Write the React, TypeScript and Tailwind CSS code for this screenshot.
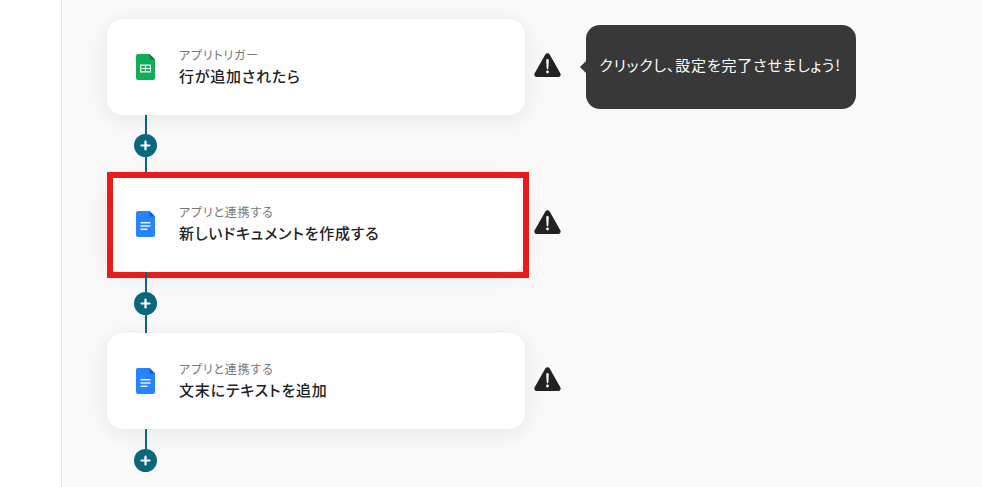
const FONT = "font-['Noto_Sans_CJK_JP','Noto_Sans',sans-serif] [font-feature-settings:'palt'] tracking-wider";

function SheetsIcon() {
  return (
    <svg width="19" height="26" viewBox="0 0 19 26" className="shrink-0">
      <path d="M2 0h11.5L19 5.5V24a2 2 0 0 1-2 2H2a2 2 0 0 1-2-2V2a2 2 0 0 1 2-2z" fill="#0ead56" />
      <path d="M13.5 0L19 5.5h-4a1.5 1.5 0 0 1-1.5-1.5z" fill="#0a7f3f" />
      <path d="M4 10.5h11v8H4z" fill="#e8f7ee" />
      <path d="M5.2 11.7h3.7v2.2H5.2zM10.1 11.7h3.7v2.2h-3.7zM5.2 15.1h3.7v2.2H5.2zM10.1 15.1h3.7v2.2h-3.7z" fill="#0ead56" />
    </svg>
  );
}

function DocsIcon() {
  return (
    <svg width="19" height="26" viewBox="0 0 19 26" className="shrink-0">
      <path d="M2 0h11.5L19 5.5V24a2 2 0 0 1-2 2H2a2 2 0 0 1-2-2V2a2 2 0 0 1 2-2z" fill="#2684fc" />
      <path d="M13.5 0L19 5.5h-4a1.5 1.5 0 0 1-1.5-1.5z" fill="#0f5fd0" />
      <path d="M4.5 11h10v1.6h-10zM4.5 14.2h10v1.6h-10zM4.5 17.4h7v1.6h-7z" fill="#e6f0ff" />
    </svg>
  );
}

function WarningIcon() {
  return (
    <svg width="27" height="24" viewBox="0 0 27 24" className="shrink-0">
      <path
        d="M11.3 1.6a2.5 2.5 0 0 1 4.4 0l10.6 18.6a2.5 2.5 0 0 1-2.2 3.8H2.9a2.5 2.5 0 0 1-2.2-3.8z"
        fill="#222222"
      />
      <path d="M12.2 7.4a1.3 1.3 0 0 1 2.6 0l-.5 8.2a.8.8 0 0 1-1.6 0z" fill="#ffffff" />
      <circle cx="13.5" cy="19" r="1.4" fill="#ffffff" />
    </svg>
  );
}

function Connector({ last, first }: { last?: boolean; first?: boolean }) {
  return (
    <div className={`relative flex h-[61px] w-[418px] items-center pl-[27px] ${first ? "" : "pt-px"}`}>
      <div className={`absolute left-[38px] top-0 w-[2px] bg-[#0b6780] ${last ? "h-8" : "bottom-0"}`} />
      <div className="relative flex h-[23px] w-[23px] items-center justify-center rounded-full bg-[#0b6780]">
        <svg width="11" height="11" viewBox="0 0 11 11">
          <path d="M5.5 1.5v8M1.5 5.5h8" stroke="#ffffff" strokeWidth="2.2" strokeLinecap="round" />
        </svg>
      </div>
    </div>
  );
}

function StepCard({
  icon,
  label,
  title,
  highlighted,
}: {
  icon: React.ReactNode;
  label: string;
  title: string;
  highlighted?: boolean;
}) {
  return (
    <div className="flex items-center">
      <div className="relative flex h-24 w-[418px] items-center rounded-2xl bg-white pl-[29px] shadow-[0_4px_24px_rgba(0,0,0,0.08)]">
        {icon}
        <div className="-mt-[1px] ml-6 flex flex-col">
          <span className="text-xs leading-[16px] text-[#777777]">{label}</span>
          <span className="mt-[2px] text-[15px] leading-[22px] font-medium text-[#222222]">{title}</span>
        </div>
        {highlighted && (
          <div className="absolute -bottom-[6px] left-0 -right-1 -top-1 border-[6px] border-[#e81c1c]" />
        )}
      </div>
      <div className="-mt-[4px] ml-[9px]">
        <WarningIcon />
      </div>
    </div>
  );
}

export default function App() {
  return (
    <div className={`flex h-[487px] w-[982px] overflow-hidden bg-white ${FONT}`}>
      <div className="w-[62px] shrink-0 border-r border-[#e2e2e2] bg-white" />
      <main className="relative flex-1 bg-[#f9f9f9] pl-[45px] pt-[19px]">
        <StepCard icon={<SheetsIcon />} label="アプリトリガー" title="行が追加されたら" />
        <Connector first />
        <StepCard icon={<DocsIcon />} label="アプリと連携する" title="新しいドキュメントを作成する" highlighted />
        <Connector />
        <StepCard icon={<DocsIcon />} label="アプリと連携する" title="文末にテキストを追加" />
        <Connector last />

        {/* Tooltip beside the first warning */}
        <div className="absolute left-[524px] top-[25px] flex h-[84px] w-[270px] items-center justify-center rounded-[14px] bg-[#383838] pb-[4px] pr-[2px] text-[15px] text-white">
          <span className="absolute -left-[6px] top-[36px] h-0 w-0 border-y-[6px] border-r-[6px] border-y-transparent border-r-[#383838]" />
          クリックし、設定を完了させましょう!
        </div>
      </main>
    </div>
  );
}
